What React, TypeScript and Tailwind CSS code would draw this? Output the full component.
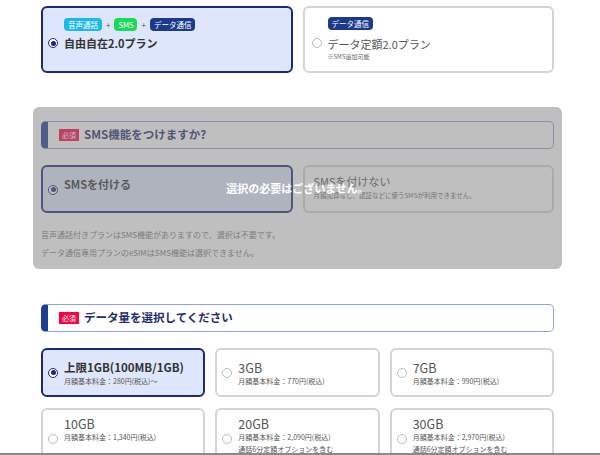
import React from 'react';

const font = { fontFamily: '"Noto Sans CJK JP", "Noto Sans", sans-serif' };

const Radio: React.FC<{ checked?: boolean }> = ({ checked }) =>
  checked ? (
    <span className="block w-[10px] h-[10px] rounded-full border-[1.5px] border-[#1b2a78] bg-white flex items-center justify-center shrink-0">
      <span className="block w-[5px] h-[5px] rounded-full bg-[#1b2a78]" />
    </span>
  ) : (
    <span className="block w-[10px] h-[10px] rounded-full border border-[#bdbdbd] bg-white shrink-0" />
  );

const Badge: React.FC<{ color: string; children: React.ReactNode }> = ({ color, children }) => (
  <span className={`${color} text-white text-[7.5px] leading-[13px] h-[13px] px-[4px] rounded-[4px] whitespace-nowrap`}>{children}</span>
);

const SectionHead: React.FC<{ title: string }> = ({ title }) => (
  <div className="h-[28px] flex items-center border border-[#8ea2d6] border-l-[7px] border-l-[#1c3d92] rounded-[5px] bg-white pl-[11px] gap-[5px]">
    <span className="bg-[#ff0040] text-white text-[7px] leading-[12px] px-[3px]">必須</span>
    <span className="text-[11.5px] font-bold text-[#1e2c6e] whitespace-nowrap">{title}</span>
  </div>
);

type Plan = { title: string; price: string; extra?: string; checked?: boolean };

const plans: Plan[] = [
  { title: '上限1GB(100MB/1GB)', price: '月額基本料金：280円(税込)〜', checked: true },
  { title: '3GB', price: '月額基本料金：770円(税込)' },
  { title: '7GB', price: '月額基本料金：990円(税込)' },
  { title: '10GB', price: '月額基本料金：1,340円(税込)' },
  { title: '20GB', price: '月額基本料金：2,090円(税込)', extra: '通話6分定額オプションを含む' },
  { title: '30GB', price: '月額基本料金：2,970円(税込)', extra: '通話6分定額オプションを含む' },
];

const App: React.FC = () => {
  return (
    <div className="h-[455px] overflow-hidden bg-white relative" style={font}>
      <div className="w-[529px] ml-[33px] pt-[6px]">
        {/* plan select */}
        <div className="px-[8px] grid grid-cols-2 gap-[10px]">
          <div className="h-[67px] rounded-[6px] border-2 border-[#1b2a78] bg-[#dde6fb] pl-[5px] pt-[10px]">
            <div className="flex items-center gap-[4px] text-[8px] text-[#555] ml-[16px]">
              <Badge color="bg-[#1cb8ea]">音声通話</Badge>
              <span>+</span>
              <Badge color="bg-[#1cd957]">SMS</Badge>
              <span>+</span>
              <Badge color="bg-[#1c3a8c]">データ通信</Badge>
            </div>
            <div className="flex items-center gap-[6px] mt-[4px]">
              <Radio checked />
              <span className="text-[11px] font-bold text-[#333] leading-[16px] whitespace-nowrap">自由自在2.0プラン</span>
            </div>
          </div>
          <div className="h-[67px] rounded-[6px] border-2 border-[#d4d4d4] bg-white pl-[7px] pt-[9px]">
            <div className="flex ml-[16px]">
              <Badge color="bg-[#1c3a8c]">データ通信</Badge>
            </div>
            <div className="flex items-center gap-[6px] mt-[6px]">
              <span className="-mt-[12px]">
                <Radio />
              </span>
              <div className="flex flex-col">
                <span className="text-[11px] text-[#555] leading-[16px] whitespace-nowrap">データ定額2.0プラン</span>
                <span className="text-[6px] text-[#666] leading-[9px] whitespace-nowrap">※SMS追加可能</span>
              </div>
            </div>
          </div>
        </div>

        {/* SMS section (disabled) */}
        <div className="relative mt-[34px] rounded-[6px] px-[8px] pt-[14px] pb-[10px] bg-white">
          <SectionHead title="SMS機能をつけますか?" />
          <div className="grid grid-cols-2 gap-[10px] mt-[16px]">
            <div className="h-[48px] rounded-[6px] border-2 border-[#1b2a78] bg-[#dde6fb] flex items-center pl-[5px] gap-[6px]">
              <span className="mt-[1px]">
                <Radio checked />
              </span>
              <span className="text-[11px] font-bold text-[#333] -mt-[9px] whitespace-nowrap">SMSを付ける</span>
            </div>
            <div className="h-[48px] rounded-[6px] border-2 border-[#d4d4d4] bg-white flex flex-col justify-center pl-[9px]">
              <span className="text-[11px] text-[#555] leading-[15px] -mt-[4px] whitespace-nowrap">SMSを付けない</span>
              <span className="text-[6.5px] text-[#666] leading-[10px] mt-[1px] whitespace-nowrap">月額加算なし、認証などに使うSMSが利用できません。</span>
            </div>
          </div>
          <p className="text-[8px] text-[#777] mt-[16px] leading-[12px] whitespace-nowrap">音声通話付きプランはSMS機能がありますので、選択は不要です。</p>
          <p className="text-[8px] text-[#777] mt-[6px] leading-[12px] whitespace-nowrap">データ通信専用プランのeSIMはSMS機能は選択できません。</p>
          <div className="absolute inset-0 rounded-[6px] bg-[rgba(128,128,128,0.5)] flex items-center justify-center">
            <span className="text-white font-bold text-[11px] whitespace-nowrap">選択の必要はございません。</span>
          </div>
        </div>

        {/* data amount */}
        <div className="px-[8px] mt-[35px]">
          <SectionHead title="データ量を選択してください" />
          <div className="grid grid-cols-3 gap-x-[10px] gap-y-[11px] mt-[16px]">
            {plans.map((p, i) => {
              const second = i >= 3;
              return (
                <div
                  key={p.title}
                  className={`${second ? 'h-[60px]' : 'h-[49px]'} rounded-[6px] border-2 ${
                    p.checked ? 'border-[#1b2a78] bg-[#dde6fb]' : 'border-[#d4d4d4] bg-white'
                  } flex items-center pl-[5px] gap-[6px]`}
                >
                  <span className={second ? 'mt-[2px]' : ''}>
                    <Radio checked={p.checked} />
                  </span>
                  <div className={`flex flex-col ${second ? 'self-start pt-[5px]' : ''}`}>
                    <span
                      className={`leading-[17px] whitespace-nowrap ${
                        p.checked ? 'text-[11.5px] font-bold text-[#333]' : 'text-[12.5px] text-[#555]'
                      }`}
                    >
                      {p.title}
                    </span>
                    <span className="text-[7px] text-[#555] leading-[11px] whitespace-nowrap">{p.price}</span>
                    {p.extra && <span className="text-[7px] text-[#555] leading-[11px] mt-[1px] whitespace-nowrap">{p.extra}</span>}
                  </div>
                </div>
              );
            })}
          </div>
        </div>
      </div>
      <div className="absolute left-0 right-0 bottom-0 h-[2px] bg-[#8a8a8a]" />
    </div>
  );
};

export default App;
